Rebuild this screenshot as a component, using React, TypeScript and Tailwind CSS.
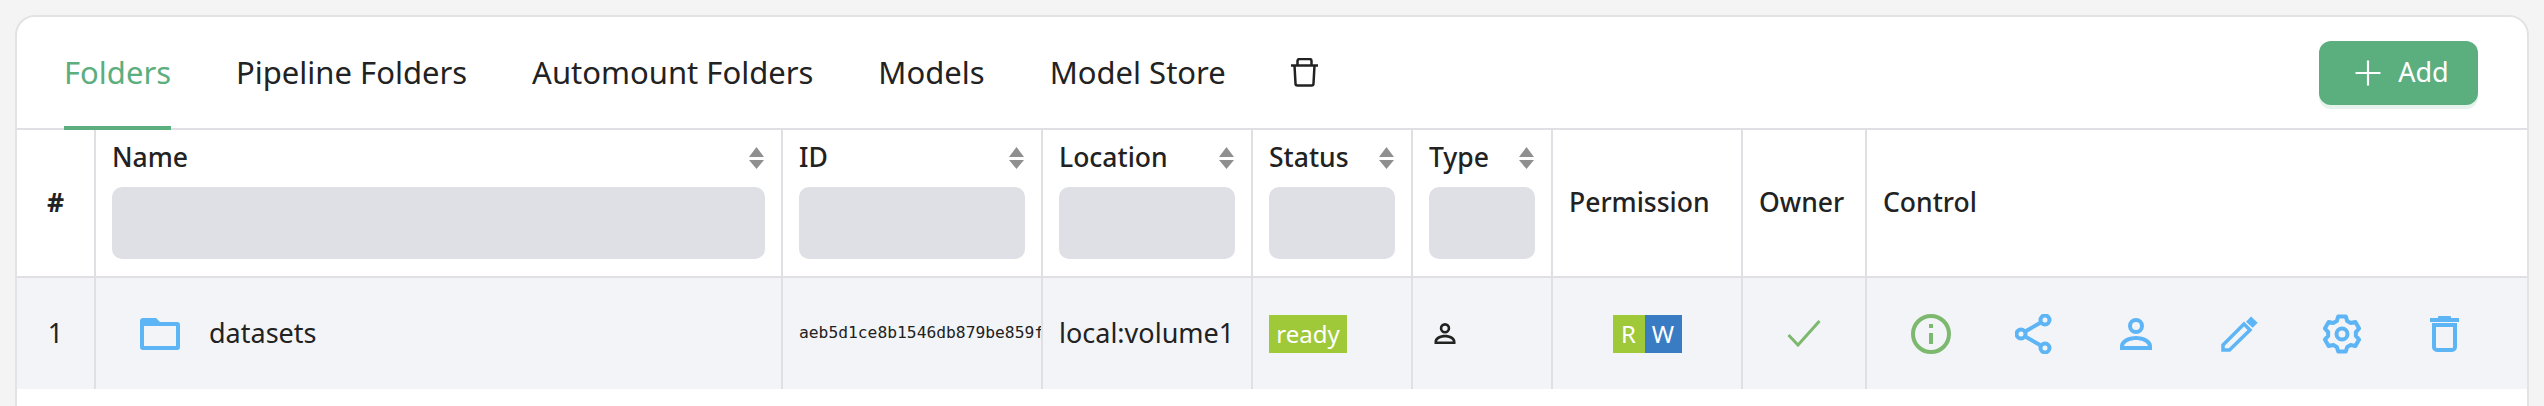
import { Plus } from "lucide-react";

const tabs = ["Folders", "Pipeline Folders", "Automount Folders", "Models", "Model Store"];

function SortIcon() {
  return (
    <svg width="15" height="22" viewBox="0 0 15 22" className="mr-px shrink-0 fill-[#8f8f8f]">
      <polygon points="7.5,0 15,10 0,10" />
      <polygon points="0,13 15,13 7.5,22" />
    </svg>
  );
}

function HeaderFilter({ label }: { label: string }) {
  return (
    <th className="border-r-2 border-b-2 border-[#e0e0e4] px-4 pt-[11px] pb-[17px] text-left font-medium">
      <div className="flex h-[34px] items-center justify-between">
        <span>{label}</span>
        <SortIcon />
      </div>
      <input aria-label={label} className="mt-[12px] block h-[72px] w-full rounded-[10px] bg-[#dfe0e5]" />
    </th>
  );
}

function PersonIcon({ className }: { className: string }) {
  return (
    <svg viewBox="0 0 32 32" className={className}>
      <circle cx="16" cy="8" r="6" fill="none" stroke="currentColor" strokeWidth="4" />
      <path
        fill="currentColor"
        fillRule="evenodd"
        d="M0 32v-4C0 22 8 18 16 18s16 4 16 10v4zM4 28h24c-1-4-7-6-12-6s-11 2-12 6z"
      />
    </svg>
  );
}

function InfoIcon() {
  return (
    <svg width="40" height="40" viewBox="0 0 40 40" className="text-[#7cb96f]">
      <circle cx="20" cy="20" r="18" fill="none" stroke="currentColor" strokeWidth="4" />
      <rect x="18" y="10" width="4" height="4" fill="currentColor" />
      <rect x="18" y="19" width="4" height="11" fill="currentColor" />
    </svg>
  );
}

function ShareIcon() {
  return (
    <svg width="38" height="40" viewBox="0 0 38 40" fill="none" stroke="currentColor" strokeWidth="4">
      <line x1="11" y1="17" x2="25" y2="9" />
      <line x1="11" y1="23" x2="25" y2="31" />
      <circle cx="30" cy="6" r="4.5" />
      <circle cx="6" cy="20" r="4.5" />
      <circle cx="30" cy="34" r="4.5" />
    </svg>
  );
}

function PencilIcon() {
  return (
    <svg width="37" height="36" viewBox="0 0 37 36" fill="none" stroke="currentColor">
      <polygon points="2,34 2,29 23,8 29,14 8.5,34" strokeWidth="3.5" />
      <polygon points="25,5.7 30,0.5 36.7,6.7 31.7,11.7" fill="currentColor" strokeWidth="0" />
    </svg>
  );
}

function GearIcon() {
  return (
    <svg width="40" height="40" viewBox="0 0 40 40" fill="none" stroke="currentColor" strokeWidth="4" strokeLinejoin="round">
      <polygon points="16.26,2.39 23.74,2.39 25.24,7.02 28.62,8.97 33.38,7.96 37.12,14.44 33.86,18.05 33.86,21.95 37.12,25.56 33.38,32.04 28.62,31.03 25.24,32.98 23.74,37.61 16.26,37.61 14.76,32.98 11.38,31.03 6.62,32.04 2.88,25.56 6.14,21.95 6.14,18.05 2.88,14.44 6.62,7.96 11.38,8.97 14.76,7.02" />
      <circle cx="20" cy="20" r="5.5" />
    </svg>
  );
}

function TrashIcon() {
  return (
    <svg width="29" height="36" viewBox="0 0 29 36" fill="none" stroke="currentColor" strokeWidth="4">
      <rect x="0" y="2" width="29" height="4" fill="currentColor" strokeWidth="0" />
      <rect x="8" y="0" width="13" height="3" rx="1" fill="currentColor" strokeWidth="0" />
      <path d="M4 9h21v22a3 3 0 0 1-3 3H7a3 3 0 0 1-3-3z" />
    </svg>
  );
}

function OutlineTrash() {
  return (
    <svg width="27" height="29" viewBox="0 0 27 29" fill="none" stroke="#222222" strokeWidth="2.5" strokeLinejoin="round">
      <path d="M0 7.5h27" />
      <path d="M6.5 7V3a2 2 0 0 1 2-2h10a2 2 0 0 1 2 2v4" />
      <path d="M3.5 7.5l1 18a2 2 0 0 0 2 2h14a2 2 0 0 0 2-2l1-18" />
    </svg>
  );
}

export default function App() {
  return (
    <div className="h-[406px] overflow-hidden bg-[#f4f4f5] px-[15px] pt-[15px] font-['Noto_Sans','Liberation_Sans',sans-serif] text-[#222222]">
      <div className="h-[420px] rounded-t-[20px] border-2 border-[#e3e3e6] bg-white">
        {/* tab bar */}
        <nav className="flex h-[113px] items-stretch border-b-2 border-[#e0e0e4] pr-[49px] pl-[47px] text-[31px]">
          <div className="flex items-stretch gap-[65px]">
            {tabs.map((tab, i) => (
              <button
                key={tab}
                className={
                  i === 0
                    ? "-mb-[2px] border-b-4 border-[#5bae7e] pt-[2px] text-[#5bae7e]"
                    : "-mb-[2px] border-b-4 border-transparent pt-[2px]"
                }
              >
                {tab}
              </button>
            ))}
            <div className="flex items-center">
              <OutlineTrash />
            </div>
          </div>
          <button className="my-auto ml-auto flex h-16 w-[159px] items-center justify-center gap-[10px] rounded-[12px] bg-[#5bae7e] text-[27px] text-white shadow-[0_4px_0_#e6f3ec]">
            <Plus size={40} strokeWidth={1.3} />
            Add
          </button>
        </nav>

        <table className="w-full table-fixed border-separate border-spacing-0 text-[26.5px]">
          <colgroup>
            <col className="w-[79px]" />
            <col className="w-[687px]" />
            <col className="w-[260px]" />
            <col className="w-[210px]" />
            <col className="w-[160px]" />
            <col className="w-[140px]" />
            <col className="w-[190px]" />
            <col className="w-[124px]" />
            <col />
          </colgroup>
          <thead>
            <tr>
              <th className="border-r-2 border-b-2 border-[#e0e0e4] font-bold">#</th>
              <HeaderFilter label="Name" />
              <HeaderFilter label="ID" />
              <HeaderFilter label="Location" />
              <HeaderFilter label="Status" />
              <HeaderFilter label="Type" />
              <th className="border-r-2 border-b-2 border-[#e0e0e4] px-4 text-left font-medium">Permission</th>
              <th className="border-r-2 border-b-2 border-[#e0e0e4] px-4 text-left font-medium">Owner</th>
              <th className="border-b-2 border-[#e0e0e4] px-4 text-left font-medium">Control</th>
            </tr>
          </thead>
          <tbody className="bg-[#f3f4f7] text-[27px]">
            <tr className="h-[111px]">
              <td className="border-r-2 border-[#e0e0e4] text-center">1</td>
              <td className="border-r-2 border-[#e0e0e4] pl-[44px]">
                <div className="flex items-center gap-[29px]">
                  <svg width="40" height="32" viewBox="0 0 40 32" className="shrink-0 fill-[#5eb5f5]">
                    <path
                      fillRule="evenodd"
                      d="M3 0h13l4 4h17a3 3 0 0 1 3 3v22a3 3 0 0 1-3 3H3a3 3 0 0 1-3-3V3a3 3 0 0 1 3-3zM4 8v20h32V8z"
                    />
                  </svg>
                  datasets
                </div>
              </td>
              <td className="border-r-2 border-[#e0e0e4] pl-4">
                <div className="w-[242px] overflow-hidden font-['DejaVu_Sans_Mono',monospace] text-[16.3px] whitespace-nowrap">
                  aeb5d1ce8b1546db879be859f1c0
                </div>
              </td>
              <td className="border-r-2 border-[#e0e0e4] pl-4">local:volume1</td>
              <td className="border-r-2 border-[#e0e0e4] pl-4">
                <span className="flex h-[38px] w-[78px] items-center justify-center bg-[#a0c93a] text-[24px] text-white">
                  ready
                </span>
              </td>
              <td className="border-r-2 border-[#e0e0e4] pl-[21px]">
                <PersonIcon className="h-[21px] w-[22px] text-[#222222]" />
              </td>
              <td className="border-r-2 border-[#e0e0e4]">
                <div className="flex justify-center text-[24px] text-white">
                  <span className="flex h-[38px] w-8 items-center justify-center bg-[#a0c93a]">R</span>
                  <span className="flex h-[38px] w-[37px] items-center justify-center bg-[#3a7cc4]">W</span>
                </div>
              </td>
              <td className="border-r-2 border-[#e0e0e4]">
                <div className="flex justify-center">
                  <svg width="34" height="27" viewBox="0 0 34 27" fill="none" stroke="#7cb96f" strokeWidth="3">
                    <polyline points="1.5,15 11,25 32.5,1" />
                  </svg>
                </div>
              </td>
              <td>
                <div className="flex items-center pl-[13px] text-[#5eb5f5]">
                  <span className="flex w-[102.6px] justify-center"><InfoIcon /></span>
                  <span className="flex w-[102.6px] justify-center"><ShareIcon /></span>
                  <span className="flex w-[102.6px] justify-center"><PersonIcon className="h-8 w-8" /></span>
                  <span className="flex w-[102.6px] justify-center"><PencilIcon /></span>
                  <span className="flex w-[102.6px] justify-center"><GearIcon /></span>
                  <span className="flex w-[102.6px] justify-center"><TrashIcon /></span>
                </div>
              </td>
            </tr>
          </tbody>
        </table>
      </div>
    </div>
  );
}
